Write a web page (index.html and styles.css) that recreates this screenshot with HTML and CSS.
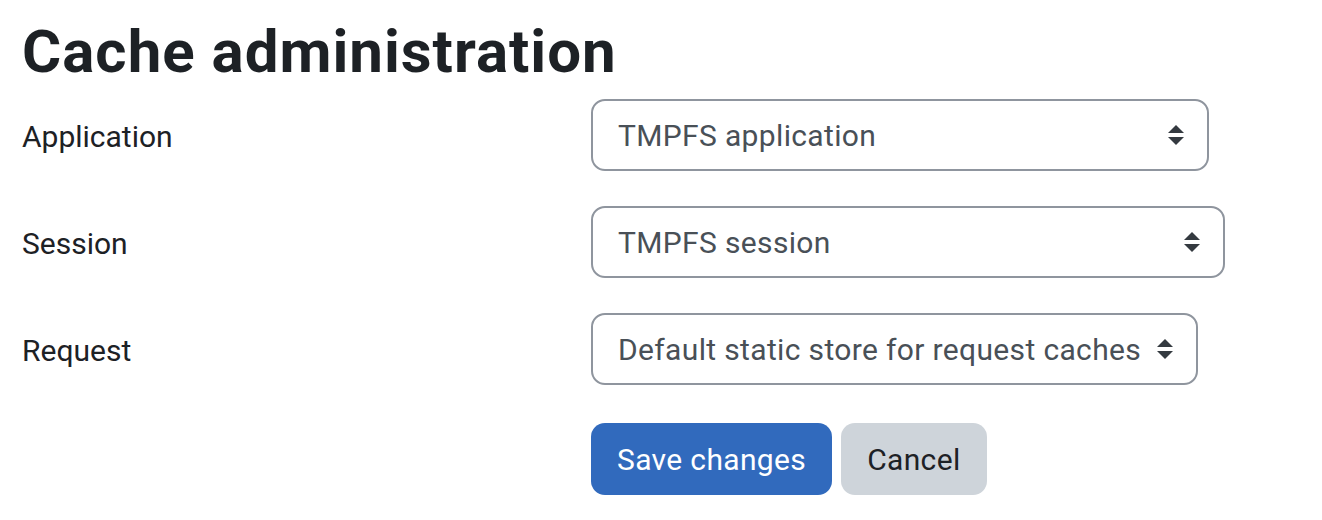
FILE: index.html
```html
<!DOCTYPE html>
<html lang="en">
<head>
<meta charset="utf-8">
<title>Cache administration</title>
<link rel="stylesheet" href="styles.css">
</head>
<body>
<main class="page">
  <h1 class="title">Cache administration</h1>
  <form class="form">
    <div class="row">
      <label class="label">Application</label>
      <div class="select select-app">
        <span class="select-text">TMPFS application</span>
        <svg class="arrow" width="16" height="20" viewBox="0 0 16 20"><path d="M8 0 L16 8 L0 8 Z M0 12 L16 12 L8 20 Z" fill="#343a40"/></svg>
      </div>
    </div>
    <div class="row">
      <label class="label">Session</label>
      <div class="select select-session">
        <span class="select-text">TMPFS session</span>
        <svg class="arrow" width="16" height="20" viewBox="0 0 16 20"><path d="M8 0 L16 8 L0 8 Z M0 12 L16 12 L8 20 Z" fill="#343a40"/></svg>
      </div>
    </div>
    <div class="row">
      <label class="label">Request</label>
      <div class="select select-request">
        <span class="select-text">Default static store for request caches</span>
        <svg class="arrow" width="16" height="20" viewBox="0 0 16 20"><path d="M8 0 L16 8 L0 8 Z M0 12 L16 12 L8 20 Z" fill="#343a40"/></svg>
      </div>
    </div>
    <div class="row buttons-row">
      <span class="label"></span>
      <div class="buttons">
        <button type="button" class="btn btn-primary">Save changes</button>
        <button type="button" class="btn btn-secondary">Cancel</button>
      </div>
    </div>
  </form>
</main>
</body>
</html>
```
FILE: styles.css
```css
html, body {
  margin: 0;
  padding: 0;
  background: #fff;
}
body {
  font-family: Roboto, "Liberation Sans", sans-serif;
  color: #1d2125;
}
.page {
  padding: 16px 22px 0 22px;
}
.title {
  margin: 0 0 11px 0;
  font-size: 60px;
  line-height: 72px;
  font-weight: 700;
  letter-spacing: 1px;
  color: #1d2125;
}
.form {
  display: flex;
  flex-direction: column;
}
.row {
  display: grid;
  grid-template-columns: 569px auto;
  align-items: center;
  margin-bottom: 35px;
}
.label {
  font-size: 30px;
  line-height: 45px;
  color: #1d2125;
  padding-top: 3px;
}
.select {
  justify-self: start;
  display: flex;
  align-items: center;
  justify-content: space-between;
  height: 72px;
  box-sizing: border-box;
  border: 2px solid #8f959e;
  border-radius: 14px;
  padding: 0 23px 0 25px;
  font-size: 30px;
  letter-spacing: 0.35px;
  color: #495057;
  background: #fff;
}
.select-app {
  width: 618px;
}
.select-session {
  width: 634px;
}
.select-request {
  width: 607px;
}
.select-text {
  white-space: nowrap;
}
.arrow {
  margin-left: 12px;
  flex: none;
}
.buttons-row {
  margin-top: 3px;
}
.buttons {
  display: flex;
  gap: 9px;
}
.btn {
  font-family: inherit;
  font-size: 30px;
  line-height: 45px;
  letter-spacing: 0.35px;
  height: 72px;
  border: none;
  border-radius: 14px;
  padding: 0 26px;
  cursor: pointer;
}
.btn-primary {
  background: #316abd;
  color: #fff;
}
.btn-secondary {
  background: #ced4da;
  color: #1d2125;
}
```
